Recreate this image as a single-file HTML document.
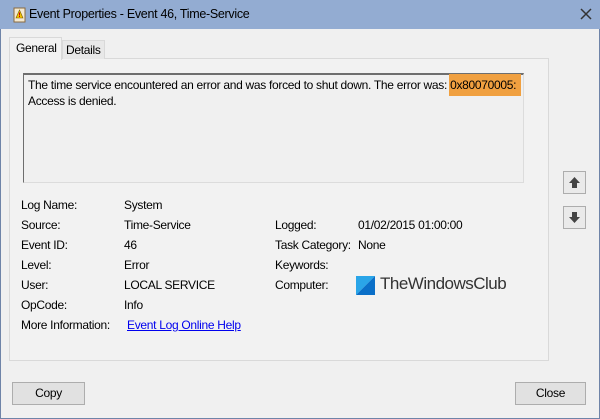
<!DOCTYPE html>
<html><head><style>
*{margin:0;padding:0;box-sizing:border-box}
body{width:600px;height:419px;overflow:hidden;background:#6f84a8;font-family:"Liberation Sans",sans-serif;font-size:12px;color:#000;position:relative;letter-spacing:-0.3px}
.a{position:absolute;white-space:nowrap}
#tb{left:0;top:0;width:600px;height:29px;background:#93acd2}
#bd{left:1px;top:29px;width:598px;height:389px;background:#f0f0f0}
.btn{position:absolute;background:#e1e1e1;border:1px solid #adadad;text-align:center;line-height:21px}
</style></head><body>
<div class="a" id="tb"></div>
<svg class="a" style="left:13px;top:7px" width="14" height="16" viewBox="0 0 14 16"><rect x="1" y="1" width="11" height="14" fill="#f4e9d0" stroke="#8a6a40"/><path d="M6.5 3 L10 11 H3Z" fill="#f2c300" stroke="#7a5a00" stroke-width=".6"/><rect x="6" y="5.5" width="1" height="3" fill="#c00"/><rect x="6" y="9" width="1" height="1" fill="#c00"/></svg>
<div class="a" style="left:29px;top:7px;font-size:12.5px">Event Properties - Event 46, Time-Service</div>
<svg class="a" style="left:580px;top:8px" width="12" height="12"><path d="M1 1L11 11M11 1L1 11" stroke="#333" stroke-width="1.5"/></svg>
<div class="a" id="bd"></div>
<div class="a" style="left:9px;top:58px;width:540px;height:303px;border:1px solid #d9d9d9;background:#f2f2f2"></div>
<div class="a" style="left:62px;top:40px;width:43px;height:19px;border:1px solid #d9d9d9;border-bottom:none;background:#e8e8e8"></div>
<div class="a" style="left:66px;top:43px">Details</div>
<div class="a" style="left:9px;top:37px;width:53px;height:23px;border:1px solid #d9d9d9;border-bottom:none;background:#f2f2f2"></div>
<div class="a" style="left:16px;top:41px">General</div>
<div class="a" style="left:23px;top:73px;width:501px;height:110px;border:1px solid #dcdcdc;border-top:2px solid #6e6e6e;border-left:1px solid #6e6e6e;background:#f0f0f0"></div>
<div class="a" style="left:28px;top:77px;line-height:16px">The time service encountered an error and was forced to shut down. The error was: <span style="background:#f0a040;padding:4px 5px 4px 1px;margin-left:-1px">0x80070005:</span><br>Access is denied.</div>
<div class="a" style="left:21px;top:195px;line-height:20px">Log Name:<br>Source:<br>Event ID:<br>Level:<br>User:<br>OpCode:<br>More Information:</div>
<div class="a" style="left:124px;top:195px;line-height:20px">System<br>Time-Service<br>46<br>Error<br>LOCAL SERVICE<br>Info</div>
<div class="a" style="left:127px;top:318px;color:#0000ee;text-decoration:underline">Event Log Online Help</div>
<div class="a" style="left:275px;top:215px;line-height:20px">Logged:<br>Task Category:<br>Keywords:<br>Computer:</div>
<div class="a" style="left:358px;top:215px;line-height:20px">01/02/2015 01:00:00<br>None</div>
<svg class="a" style="left:356px;top:276px" width="19" height="19"><path d="M0 0H19L0 19Z" fill="#2aa5e8"/><path d="M19 0V19H0Z" fill="#0a6fc8"/></svg>
<div class="a" style="left:380px;top:274px;font-size:17px;color:#333;letter-spacing:-.5px">TheWindowsClub</div>
<div class="btn" style="left:563px;top:171px;width:23px;height:23px;background:#eaeaea"></div>
<svg class="a" style="left:568px;top:176px" width="13" height="13"><path d="M6.5 1L12 7H9V12H4V7H1Z" fill="#444"/></svg>
<div class="btn" style="left:563px;top:206px;width:23px;height:23px;background:#eaeaea"></div>
<svg class="a" style="left:568px;top:211px" width="13" height="13"><path d="M6.5 12L12 6H9V1H4V6H1Z" fill="#444"/></svg>
<div class="btn" style="left:12px;top:382px;width:73px;height:23px">Copy</div>
<div class="btn" style="left:515px;top:382px;width:71px;height:23px">Close</div>
</body></html>
